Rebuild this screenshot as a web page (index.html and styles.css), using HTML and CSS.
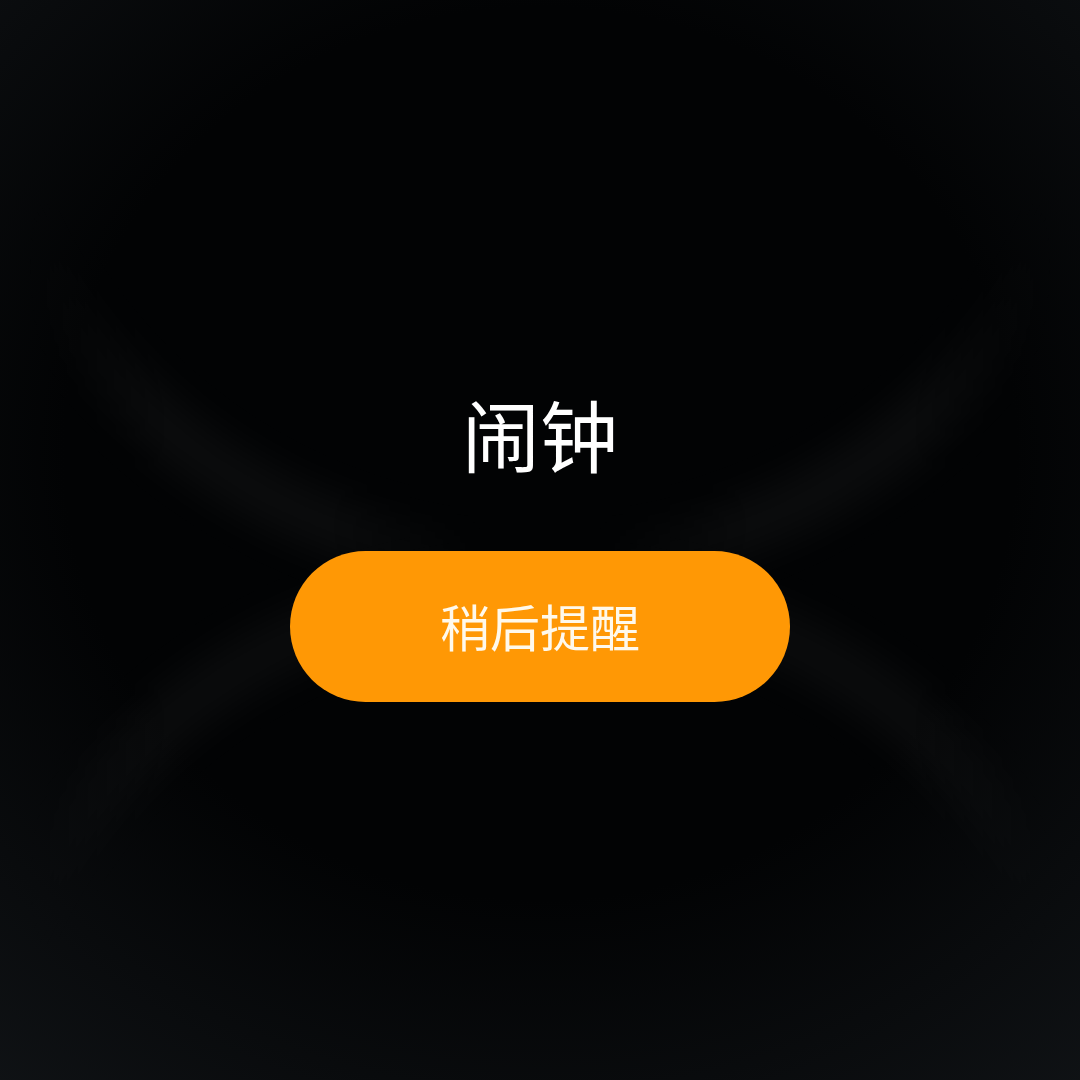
FILE: index.html
```html
<!DOCTYPE html>
<html lang="zh-CN">
<head>
  <meta charset="UTF-8">
  <meta name="viewport" content="width=device-width, initial-scale=1.0">
  <title>闹钟</title>
  <link rel="stylesheet" href="styles.css">
</head>
<body>
  <div class="screen">
    <div class="glow glow-top"></div>
    <div class="glow glow-bottom"></div>

    <div class="alarm">
      <h1 class="alarm-title">闹钟</h1>
      <button class="snooze" type="button">稍后提醒</button>
    </div>
  </div>
</body>
</html>
```

FILE: styles.css
```css
*{
  margin: 0;
  padding: 0;
  box-sizing: border-box;
}

body{
  background-color: #020304;
  font-family: "Noto Sans CJK SC", "Noto Sans", sans-serif;
}

.screen{
  position: relative;
  width: 1080px;
  height: 1080px;
  overflow: hidden;
  /* 가장자리가 살짝 밝은 비네팅 */
  background:
    radial-gradient(ellipse 80% 75% at 50% 42%, rgba(0,0,0,0) 55%, rgba(24,28,32,0.6) 100%),
    #020304;
}

/* 배경의 흐린 곡선 빛 (두 개의 원호) */
.glow{
  position: absolute;
  top: 0;
  left: 0;
  width: 1080px;
  height: 1080px;
  filter: blur(22px);
  pointer-events: none;
  -webkit-mask-image: linear-gradient(90deg, transparent 2%, #000 16%, #000 30%, transparent 46%, transparent 54%, #000 70%, #000 84%, transparent 98%);
  mask-image: linear-gradient(90deg, transparent 2%, #000 16%, #000 30%, transparent 46%, transparent 54%, #000 70%, #000 84%, transparent 98%);
}
.glow-top{
  background: radial-gradient(circle at 540px -20px,
    rgba(255,255,255,0) 545px,
    rgba(255,255,255,0.06) 582px,
    rgba(255,255,255,0) 625px);
}
.glow-bottom{
  background: radial-gradient(circle at 540px 1170px,
    rgba(255,255,255,0) 545px,
    rgba(255,255,255,0.055) 582px,
    rgba(255,255,255,0) 625px);
}

.alarm{
  position: relative;
  display: flex;
  flex-direction: column;
  align-items: center;
  padding-top: 394px;
  gap: 79px;
}

.alarm-title{
  color: #ffffff;
  font-size: 78px;
  font-weight: 400;
  line-height: 1;
}

.snooze{
  width: 500px;
  height: 151px;
  border: none;
  border-radius: 76px;
  background-color: #ff9805;
  color: #fff9ec;
  font-family: inherit;
  font-size: 50px;
  font-weight: 400;
  line-height: 1;
  padding-bottom: 4px;
  display: flex;
  justify-content: center;
  align-items: center;
}
```
